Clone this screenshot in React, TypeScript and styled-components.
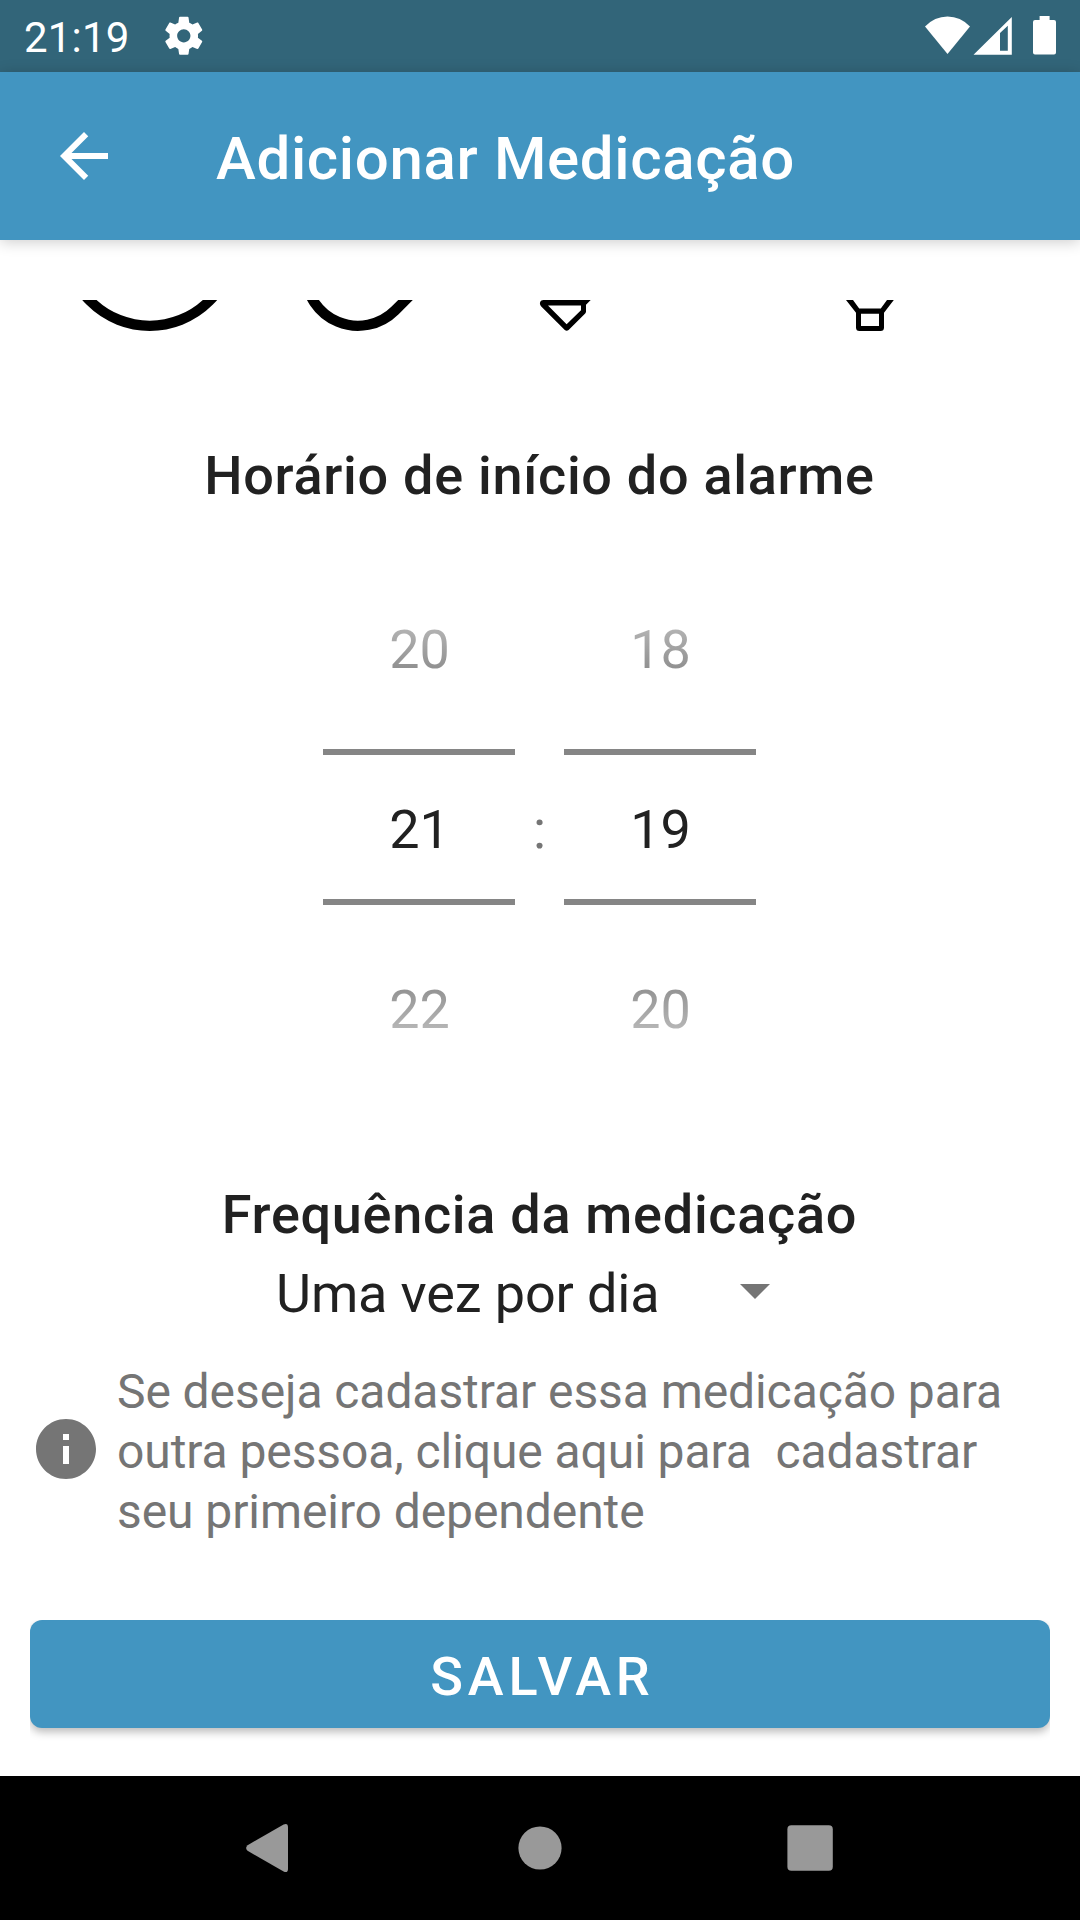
import React from "react";
import styled, { createGlobalStyle } from "styled-components";

const blue = "#4295c1";
const ink = "#212121";
const muted = "#757575";

const GlobalStyle = createGlobalStyle`
  * { box-sizing: border-box; }
  body { margin: 0; background: #fff; font-family: Roboto, sans-serif; }
  svg { display: block; flex: none; }
`;

const Screen = styled.div`
  display: flex;
  flex-direction: column;
  width: 1080px;
  height: 1920px;
  overflow: hidden;
  background: #fff;
`;

const StatusBar = styled.header`
  display: flex;
  align-items: center;
  flex: none;
  height: 72px;
  padding: 0 24px 0 24px;
  background: #326579;
  color: #fff;
`;

const Clock = styled.span`
  width: 137px;
  font-size: 42px;
  line-height: 48px;
  letter-spacing: 0.2px;
  padding-top: 3px;
`;

const StatusIcons = styled.div`
  display: flex;
  margin-left: auto;
`;

const AppBar = styled.div`
  display: flex;
  align-items: center;
  flex: none;
  height: 168px;
  padding-left: 48px;
  background: ${blue};
  box-shadow: 0 2px 14px rgba(0, 0, 0, 0.2);
`;

const IconButton = styled.button`
  display: flex;
  padding: 0;
  border: 0;
  background: none;
`;

const Title = styled.h1`
  margin: 0 0 0 96px;
  padding-top: 5px;
  font-size: 60px;
  font-weight: 500;
  line-height: 70px;
  letter-spacing: 0.65px;
  color: #fff;
`;

const Content = styled.main`
  display: flex;
  flex-direction: column;
  flex: 1;
  padding: 60px 30px 0;
`;

const ShapeRow = styled.div`
  display: flex;
  height: 32px;
  padding-left: 52px;
  overflow: hidden;
`;

const Shape = styled.svg<{ $before?: number }>`
  margin-left: ${(p) => p.$before ?? 0}px;
`;

const Heading = styled.h2<{ $top: number }>`
  margin: ${(p) => p.$top}px 0 0;
  padding-right: 1px;
  font-size: 54px;
  font-weight: 500;
  line-height: 64px;
  letter-spacing: 0.71px;
  text-align: center;
  color: ${ink};
`;

const TimePicker = styled.div`
  display: flex;
  justify-content: center;
  align-items: center;
  height: 540px;
  margin-top: 49px;
  padding-right: 1px;
`;

const Wheel = styled.div`
  display: flex;
  flex-direction: column;
  align-items: center;
  width: 192px;
`;

const WheelValue = styled.div<{ $fade?: "up" | "down" }>`
  display: flex;
  align-items: center;
  justify-content: center;
  height: ${(p) => (p.$fade ? 210 : 144)}px;
  padding-top: ${(p) => (p.$fade === "up" ? 11 : p.$fade === "down" ? 0 : 5)}px;
  padding-bottom: ${(p) => (p.$fade === "down" ? 1 : 0)}px;
  padding-left: 1px;
  font-size: 54px;
  line-height: 64px;
  color: ${ink};
  ${(p) =>
    p.$fade &&
    `
    color: transparent;
    background: linear-gradient(${p.$fade === "up" ? "to top" : "to bottom"}, #4c4c4c, #ffffff);
    background-clip: text;
    -webkit-background-clip: text;
  `}
`;

const Rule = styled.div`
  width: 100%;
  height: 6px;
  background: #858585;
`;

const Colon = styled.span`
  width: 49px;
  padding-top: 5px;
  font-size: 54px;
  line-height: 64px;
  text-align: center;
  color: ${muted};
`;

const Select = styled.div`
  display: flex;
  align-items: center;
  height: 64px;
  margin-top: 15px;
  padding-left: 246px;
  font-size: 54px;
  line-height: 64px;
  letter-spacing: -0.13px;
  color: ${ink};
`;

const SelectLabel = styled.span`
  width: 464px;
`;

const Caret = styled.svg`
  margin-bottom: 6px;
`;

const Notice = styled.div`
  display: flex;
  align-items: center;
  gap: 15px;
  height: 180px;
  margin-top: 33px;
  color: ${muted};
`;

const NoticeText = styled.p`
  margin: 0;
  padding-top: 6px;
  font-size: 48px;
  line-height: 60px;
  letter-spacing: -0.08px;
  white-space: pre;
`;

const SaveButton = styled.button`
  flex: none;
  height: 108px;
  margin-top: 81px;
  padding: 6px 0 0 5px;
  border: 0;
  border-radius: 12px;
  background: ${blue};
  color: #fff;
  font: 500 54px/64px Roboto, sans-serif;
  letter-spacing: 4.82px;
  box-shadow: 0 4px 8px rgba(0, 0, 0, 0.27);
  clip-path: inset(0 0 -20px 0);
`;

const NavBar = styled.nav`
  display: flex;
  align-items: center;
  justify-content: space-between;
  flex: none;
  height: 144px;
  padding: 0 243px 0 243px;
  background: #000;
`;

const GearIcon = () => (
  <svg width="45.6" height="45.6" viewBox="0 0 24 24" fill="#fff">
    <path d="M19.43 12.98c.04-.32.07-.64.07-.98s-.03-.66-.07-.98l2.11-1.65c.19-.15.24-.42.12-.64l-2-3.46c-.12-.22-.39-.3-.61-.22l-2.49 1c-.52-.4-1.08-.73-1.69-.98l-.38-2.65C14.46 2.18 14.25 2 14 2h-4c-.25 0-.46.18-.49.42l-.38 2.65c-.61.25-1.17.59-1.69.98l-2.49-1c-.23-.09-.49 0-.61.22l-2 3.46c-.13.22-.07.49.12.64l2.11 1.65c-.04.32-.07.65-.07.98s.03.66.07.98l-2.11 1.65c-.19.15-.24.42-.12.64l2 3.46c.12.22.39.3.61.22l2.49-1c.52.4 1.08.73 1.69.98l.38 2.65c.03.24.24.42.49.42h4c.25 0 .46-.18.49-.42l.38-2.65c.61-.25 1.17-.59 1.69-.98l2.49 1c.23.09.49 0 .61-.22l2-3.46c.12-.22.07-.49-.12-.64l-2.11-1.65zM12 15.5c-1.93 0-3.5-1.57-3.5-3.5s1.57-3.5 3.5-3.5 3.5 1.57 3.5 3.5-1.57 3.5-3.5 3.5z" />
  </svg>
);

const wheels = [
  ["20", "21", "22"],
  ["18", "19", "20"],
];

function NumberWheel({ values }: { values: string[] }) {
  return (
    <Wheel>
      <WheelValue $fade="up">{values[0]}</WheelValue>
      <Rule />
      <WheelValue>{values[1]}</WheelValue>
      <Rule />
      <WheelValue $fade="down">{values[2]}</WheelValue>
    </Wheel>
  );
}

export default function App() {
  return (
    <Screen>
      <GlobalStyle />
      <StatusBar>
        <Clock>21:19</Clock>
        <GearIcon />
        <StatusIcons>
          <svg width="48" height="40" viewBox="924 16 48 40" fill="#fff">
            <path d="M925 26.5Q934.5 16.5 947.5 16.5T970 26.5L947.5 54Z" />
          </svg>
          <svg width="52" height="40" viewBox="972 16 52 40" fill="#fff" fillRule="evenodd">
            <path d="M973.5 54.7L1011.8 17V54.7ZM1000 33V50.7H1007.8V25.8Z" />
          </svg>
          <svg width="32" height="40" viewBox="1024 16 32 40" fill="#fff">
            <path d="M1039.6 16H1049.6V20H1054Q1056 20 1056 22V52.5Q1056 54.5 1054 54.5H1035Q1033 54.5 1033 52.5V22Q1033 20 1035 20H1039.6Z" />
          </svg>
        </StatusIcons>
      </StatusBar>

      <AppBar>
        <IconButton aria-label="Voltar">
          <svg width="72" height="72" viewBox="0 0 24 24" fill="#fff">
            <path d="M20 11H7.83l5.59-5.59L12 4l-8 8 8 8 1.41-1.41L7.83 13H20v-2z" />
          </svg>
        </IconButton>
        <Title>Adicionar Medicação</Title>
      </AppBar>

      <Content>
        <ShapeRow>
          <Shape width="136" height="32" viewBox="82 300 136 32" fill="none" stroke="#000" strokeWidth="10.3">
            <circle cx="149.7" cy="241.9" r="83.9" />
          </Shape>
          <Shape $before={88} width="108" height="32" viewBox="306 300 108 32" fill="none" stroke="#000" strokeWidth="10.3">
            <path d="M305.6 273.5A52.4 52.4 0 0 0 395 310.5L420 285.5" />
          </Shape>
          <Shape $before={125} width="54" height="32" viewBox="539 300 54 32" fillRule="evenodd">
            <path d="M543.5 300H590.7L586 304.7V311.5Q586 312.6 585.2 313.4L568.6 330Q566.6 331.6 564.8 330L541 306.2Q538.6 302.8 541.4 300.6Q542.3 300 543.5 300ZM548 305.5L566.6 324.2L581 310.2V305.5Z" />
          </Shape>
          <Shape $before={253} width="48" height="32" viewBox="846 300 48 32" fillRule="evenodd">
            <path d="M846 300H853L859.2 308.4H880.8L887 300H893.8L884 312.8V327.5Q884 331 880.5 331H859.5Q856 331 856 327.5V312.8ZM861 313.8V325.9H879V313.8Z" />
          </Shape>
        </ShapeRow>

        <Heading $top={112}>Horário de início do alarme</Heading>

        <TimePicker>
          <NumberWheel values={wheels[0]} />
          <Colon>:</Colon>
          <NumberWheel values={wheels[1]} />
        </TimePicker>

        <Heading $top={86}>Frequência da medicação</Heading>

        <Select>
          <SelectLabel>Uma vez por dia</SelectLabel>
          <Caret width="30" height="15" viewBox="0 0 30 15" fill={muted}>
            <path d="M0 0H30L15 15Z" />
          </Caret>
        </Select>

        <Notice>
          <svg width="72" height="72" viewBox="0 0 24 24" fill={muted}>
            <path d="M12 2C6.48 2 2 6.48 2 12s4.48 10 10 10 10-4.48 10-10S17.52 2 12 2zm1 15h-2v-6h2v6zm0-8h-2V7h2v2z" />
          </svg>
          <NoticeText>
            {"Se deseja cadastrar essa medicação para\noutra pessoa, clique aqui para  cadastrar\nseu primeiro dependente"}
          </NoticeText>
        </Notice>

        <SaveButton>SALVAR</SaveButton>
      </Content>

      <NavBar>
        <svg width="48" height="50" viewBox="243 1823 48 50" fill="#999">
          <path d="M247.6 1845.2L283.6 1824.4Q288 1822.6 288 1827.3V1868.7Q288 1873.4 283.6 1871.6L247.6 1850.8Q244.6 1848 247.6 1845.2Z" />
        </svg>
        <svg width="50" height="44" viewBox="-6 0 50 44" fill="#999">
          <circle cx="22" cy="22" r="21.6" />
        </svg>
        <svg width="54" height="46" viewBox="783 1825 54 46" fill="#999">
          <rect x="787.4" y="1825.2" width="45.4" height="45.6" rx="4" />
        </svg>
      </NavBar>
    </Screen>
  );
}
